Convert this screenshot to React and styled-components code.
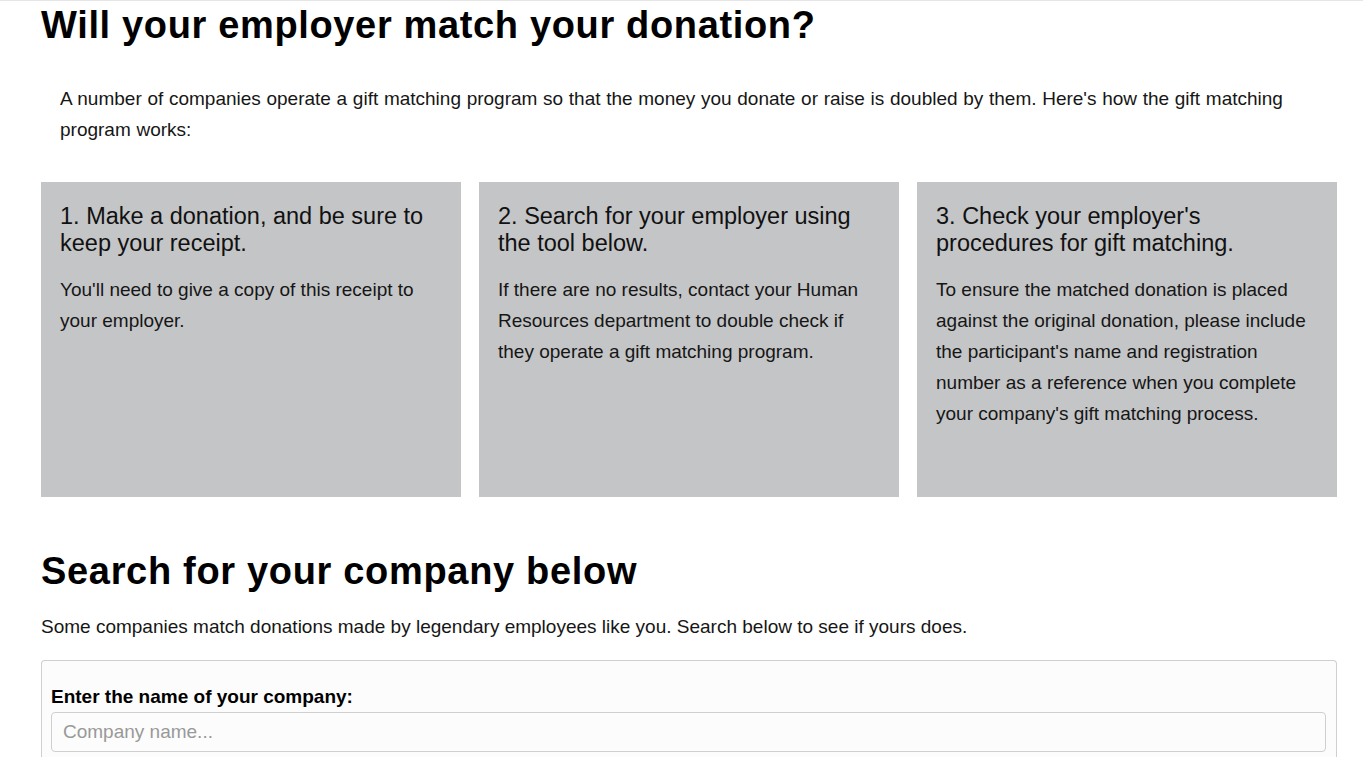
import styled, { createGlobalStyle } from "styled-components";

const GlobalStyle = createGlobalStyle`
  html, body {
    margin: 0;
    padding: 0;
    background: #fff;
    font-family: "Liberation Sans", Arial, sans-serif;
    color: #161616;
  }
  * {
    box-sizing: border-box;
  }
`;

const Page = styled.main`
  padding: 1px 26px 0 41px;
  border-top: 1px solid #e6e6e6;
`;

const Title = styled.h1`
  margin: 0;
  font-size: 38px;
  line-height: 46px;
  font-weight: 700;
  letter-spacing: 0.65px;
  color: #000;
`;

const Intro = styled.p`
  margin: 35px 0 0;
  padding: 0 20px 0 19px;
  font-size: 19px;
  line-height: 31px;
  word-spacing: 0.4px;
`;

const Steps = styled.div`
  display: grid;
  grid-template-columns: repeat(3, 1fr);
  gap: 18px;
  margin-top: 37px;
`;

const Card = styled.section`
  background: #c4c5c7;
  min-height: 315px;
  padding: 21px 19px 20px;
`;

const CardTitle = styled.h3`
  margin: 0 0 17px;
  font-size: 23.5px;
  line-height: 27px;
  font-weight: 400;
  color: #111;
`;

const CardText = styled.p`
  margin: 0;
  font-size: 19px;
  line-height: 31px;
`;

const Heading = styled.h2`
  margin: 51px 0 0;
  font-size: 38px;
  line-height: 46px;
  font-weight: 700;
  letter-spacing: 0.68px;
  color: #000;
`;

const Lead = styled.p`
  margin: 17px 0 0;
  font-size: 19px;
  line-height: 31px;
`;

const SearchBox = styled.div`
  margin-top: 18px;
  border: 1px solid #cfcfcf;
  border-bottom: none;
  border-radius: 4px 4px 0 0;
  background: #fcfcfc;
  padding: 25px 10px 8px 9px;
`;

const Label = styled.label`
  display: block;
  font-size: 19px;
  line-height: 22px;
  font-weight: 700;
  color: #000;
  margin-bottom: 4px;
`;

const Input = styled.input`
  display: block;
  width: 100%;
  height: 40px;
  padding: 0 11px;
  border: 1px solid #cfcfcf;
  border-radius: 4px;
  background: #fcfcfc;
  font-family: "Liberation Sans", Arial, sans-serif;
  font-size: 19px;
  color: #222;
  outline: none;

  &::placeholder {
    color: #999;
  }
`;

const steps = [
  {
    title: "1. Make a donation, and be sure to keep your receipt.",
    text: "You'll need to give a copy of this receipt to your employer.",
  },
  {
    title: "2. Search for your employer using the tool below.",
    text: "If there are no results, contact your Human Resources department to double check if they operate a gift matching program.",
  },
  {
    title: "3. Check your employer's procedures for gift matching.",
    text: "To ensure the matched donation is placed against the original donation, please include the participant's name and registration number as a reference when you complete your company's gift matching process.",
  },
];

export default () => {
  return (
    <>
      <GlobalStyle />
      <Page>
        <Title>Will your employer match your donation?</Title>
        <Intro>
          A number of companies operate a gift matching program so that the
          money you donate or raise is doubled by them. Here's how the gift
          matching program works:
        </Intro>

        <Steps>
          {steps.map((s) => (
            <Card key={s.title}>
              <CardTitle>{s.title}</CardTitle>
              <CardText>{s.text}</CardText>
            </Card>
          ))}
        </Steps>

        <Heading>Search for your company below</Heading>
        <Lead>
          Some companies match donations made by legendary employees like you.
          Search below to see if yours does.
        </Lead>

        <SearchBox>
          <Label htmlFor="company">Enter the name of your company:</Label>
          <Input id="company" placeholder="Company name..." />
        </SearchBox>
      </Page>
    </>
  );
};
